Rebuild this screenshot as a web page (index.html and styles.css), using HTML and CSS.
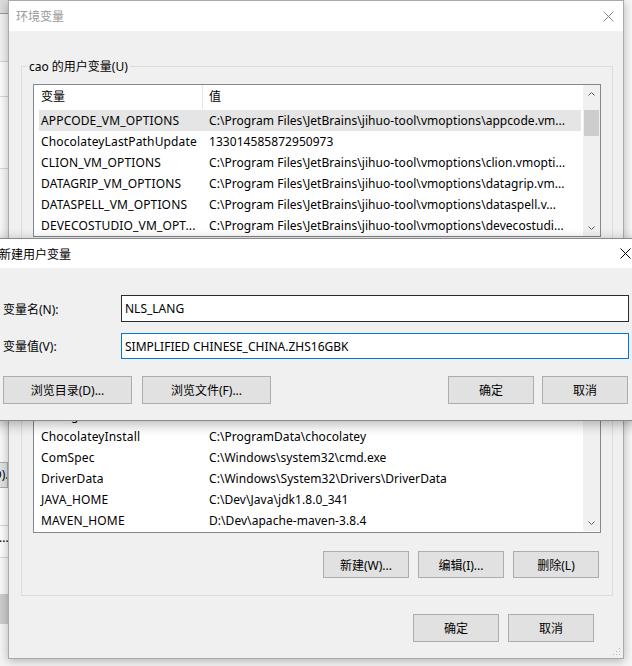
FILE: index.html
```html
<!DOCTYPE html>
<html lang="zh-CN">
<head>
<meta charset="utf-8">
<title>环境变量</title>
<link rel="stylesheet" href="styles.css">
</head>
<body>
<div class="behind">
  <div class="bh b1"></div>
  <div class="bh b2"></div>
  <div class="bh b3"></div>
  <div class="bh b4"></div>
  <div class="bh b5"></div>
  <div class="bh b6"></div>
  <div class="bh b7"><span class="tail">D).</span></div>
  <div class="bh b8"></div>
  <div class="bh b9"><span class="dots">...</span></div>
  <div class="bh b10"></div>
  <div class="bh b11"></div>
  <div class="bh b12"></div>
</div>

<div class="env">
  <div class="titlebar inactive">
    <span class="title">环境变量</span>
    <svg class="close" width="11" height="11" viewBox="0 0 11 11"><path d="M0.5 0.5 L10.5 10.5 M10.5 0.5 L0.5 10.5" stroke="#8c8c8c" stroke-width="1" fill="none"/></svg>
  </div>
  <div class="env-body">
    <div class="group g1">
      <div class="group-label">cao 的用户变量(U)</div>
      <div class="list l1">
        <div class="list-main">
          <div class="lv-header"><div class="h1">变量</div><div class="h2">值</div></div>
          <div class="row sel"><span class="c1">APPCODE_VM_OPTIONS</span><span class="c2">C:\Program Files\JetBrains\jihuo-tool\vmoptions\appcode.vm...</span></div>
          <div class="row"><span class="c1">ChocolateyLastPathUpdate</span><span class="c2">133014585872950973</span></div>
          <div class="row"><span class="c1">CLION_VM_OPTIONS</span><span class="c2">C:\Program Files\JetBrains\jihuo-tool\vmoptions\clion.vmopti...</span></div>
          <div class="row"><span class="c1">DATAGRIP_VM_OPTIONS</span><span class="c2">C:\Program Files\JetBrains\jihuo-tool\vmoptions\datagrip.vm...</span></div>
          <div class="row"><span class="c1">DATASPELL_VM_OPTIONS</span><span class="c2">C:\Program Files\JetBrains\jihuo-tool\vmoptions\dataspell.v...</span></div>
          <div class="row"><span class="c1">DEVECOSTUDIO_VM_OPT...</span><span class="c2">C:\Program Files\JetBrains\jihuo-tool\vmoptions\devecostudi...</span></div>
        </div>
        <div class="vscroll">
          <div class="arrow"><svg width="7" height="4" viewBox="0 0 7 4"><path d="M0.5 3.5 L3.5 0.5 L6.5 3.5" stroke="#606060" fill="none"/></svg></div>
          <div class="thumb"></div>
          <div class="track"></div>
          <div class="arrow"><svg width="7" height="4" viewBox="0 0 7 4"><path d="M0.5 0.5 L3.5 3.5 L6.5 0.5" stroke="#606060" fill="none"/></svg></div>
        </div>
      </div>
      <div class="btnrow occluded">
        <button class="btn">新建(N)...</button>
        <button class="btn">编辑(E)...</button>
        <button class="btn">删除(D)</button>
      </div>
    </div>

    <div class="group g2">
      <div class="group-label occluded">系统变量(S)</div>
      <div class="list l2">
        <div class="list-main">
          <div class="lv-header occluded"><div class="h1">变量</div><div class="h2">值</div></div>
          <div class="row occluded"><span class="c1">ACSetupSvcPort</span><span class="c2">23210</span></div>
          <div class="row occluded"><span class="c1">ACSvcPort</span><span class="c2">17532</span></div>
          <div class="row"><span class="c1">asl.log</span><span class="c2">Destination=file</span></div>
          <div class="row"><span class="c1">ChocolateyInstall</span><span class="c2">C:\ProgramData\chocolatey</span></div>
          <div class="row"><span class="c1">ComSpec</span><span class="c2">C:\Windows\system32\cmd.exe</span></div>
          <div class="row"><span class="c1">DriverData</span><span class="c2">C:\Windows\System32\Drivers\DriverData</span></div>
          <div class="row"><span class="c1">JAVA_HOME</span><span class="c2">C:\Dev\Java\jdk1.8.0_341</span></div>
          <div class="row"><span class="c1">MAVEN_HOME</span><span class="c2">D:\Dev\apache-maven-3.8.4</span></div>
        </div>
        <div class="vscroll">
          <div class="arrow"><svg width="7" height="4" viewBox="0 0 7 4"><path d="M0.5 3.5 L3.5 0.5 L6.5 3.5" stroke="#606060" fill="none"/></svg></div>
          <div class="track"></div>
          <div class="arrow"><svg width="7" height="4" viewBox="0 0 7 4"><path d="M0.5 0.5 L3.5 3.5 L6.5 0.5" stroke="#606060" fill="none"/></svg></div>
        </div>
      </div>
      <div class="btnrow">
        <button class="btn">新建(W)...</button>
        <button class="btn">编辑(I)...</button>
        <button class="btn">删除(L)</button>
      </div>
    </div>

    <div class="footer">
      <button class="btn tall">确定</button>
      <button class="btn tall">取消</button>
    </div>
    <div class="grip">
      <svg width="8" height="8" viewBox="0 0 8 8"><g fill="#b8b8b8"><rect x="6" y="0" width="1" height="1"/><rect x="3" y="3" width="1" height="1"/><rect x="6" y="3" width="1" height="1"/><rect x="0" y="6" width="1" height="1"/><rect x="3" y="6" width="1" height="1"/><rect x="6" y="6" width="1" height="1"/></g></svg>
    </div>
  </div>
</div>

<div class="dialog">
  <div class="titlebar">
    <span class="title">新建用户变量</span>
    <svg class="close" width="11" height="11" viewBox="0 0 11 11"><path d="M0.5 0.5 L10.5 10.5 M10.5 0.5 L0.5 10.5" stroke="#000" stroke-width="1" fill="none"/></svg>
  </div>
  <div class="dlg-body">
    <div class="field">
      <label class="flabel">变量名(N):</label>
      <div class="input hover">NLS_LANG</div>
    </div>
    <div class="field f2">
      <label class="flabel">变量值(V):</label>
      <div class="input focus">SIMPLIFIED CHINESE_CHINA.ZHS16GBK</div>
    </div>
    <div class="dlg-buttons">
      <button class="btn wide">浏览目录(D)...</button>
      <button class="btn wide">浏览文件(F)...</button>
      <span class="spacer"></span>
      <button class="btn tall">确定</button>
      <button class="btn tall">取消</button>
    </div>
  </div>
</div>
</body>
</html>
```

FILE: styles.css
```css
* { box-sizing: border-box; }
html, body { margin: 0; padding: 0; }
body {
  width: 632px;
  height: 666px;
  overflow: hidden;
  position: relative;
  background: #f6f6f6;
  font-family: "Noto Sans", "Noto Sans CJK SC", sans-serif;
  font-size: 12px;
  color: #000;
}

/* part of a window lying behind, at the left edge */
.behind {
  position: absolute;
  left: 0; top: 0;
  width: 8px; height: 666px;
  background: #f0f0f0;
  overflow: hidden;
  display: flex;
  flex-direction: column;
}
.bh { flex: none; white-space: nowrap; overflow: hidden; }
.b1 { height: 13px; background: #dcdcdc; }
.b2 { height: 1px; background: #9a9a9a; }
.b3 { height: 48px; background: #f0f0f0; border-bottom: 1px solid #d0d0d0; }
.b4 { height: 35px; background: #fafafa; border-bottom: 1px solid #d6d6d6; }
.b5 { height: 72px; background: #fafafa; border-bottom: 1px solid #d6d6d6; }
.b6 { height: 293px; background: #f7f7f7; }
.b7 { height: 26px; background: #e1e1e1; border: 1px solid #adadad; border-left: 0; line-height: 24px; }
.b7 .tail { display: inline-block; margin-left: -7px; }
.b8 { height: 38px; background: #fbfbfb; border-bottom: 1px solid #d6d6d6; }
.b9 { height: 32px; background: #fbfbfb; line-height: 24px; border-bottom: 1px solid #d6d6d6; }
.b9 .dots { display: inline-block; margin-left: -1px; }
.b10 { height: 36px; background: #f7f7f7; }
.b11 { height: 30px; background: #cccccc; }
.b12 { flex: 1; background: #f4f4f4; }

/* windows */
.titlebar {
  flex: none;
  display: flex;
  align-items: center;
  justify-content: space-between;
  background: #fff;
}
.title { white-space: nowrap; }
.inactive .title { color: #999; }
.close { flex: none; display: block; }

.occluded { visibility: hidden; }

.env {
  position: absolute;
  left: 8px; top: 0;
  width: 616px; height: 659px;
  background: #f0f0f0;
  border: 1px solid #aaaaaa;
  box-shadow: 0 2px 9px rgba(0,0,0,0.28);
  display: flex;
  flex-direction: column;
}
.env .titlebar { height: 30px; padding: 0 9px 0 7px; }
.env-body {
  flex: 1;
  position: relative;
  padding: 35px 10px 0 12px;
  display: flex;
  flex-direction: column;
}

.group {
  border: 1px solid #dcdcdc;
  padding: 0 11px;
}
.g1 { padding-bottom: 14px; }
.g2 { margin-top: 26px; padding-bottom: 17px; }
.group-label {
  width: max-content;
  height: 17px;
  line-height: 17px;
  margin: -9px 0 0 -6px;
  padding: 0 2px;
  background: #f0f0f0;
  white-space: nowrap;
}

.list {
  margin-top: 9px;
  border: 1px solid #828790;
  background: #fff;
  display: flex;
  overflow: hidden;
}
.l1 { height: 153px; }
.l2 { height: 196px; padding-bottom: 1px; }
.list-main { flex: 1; min-width: 0; overflow: hidden; }
.lv-header { height: 25px; display: flex; }
.h1 { width: 168px; padding-left: 7px; line-height: 24px; }
.h2 { flex: 1; border-left: 1px solid #e5e5e5; padding-left: 6px; line-height: 24px; height: 24px; }
.row {
  height: 21px;
  line-height: 21px;
  margin: 0 2px 0 5px;
  display: flex;
  white-space: nowrap;
}
.row.sel { background: #e5e5e5; }
.c1 { width: 163px; flex: none; padding-left: 2px; overflow: hidden; letter-spacing: 0.15px; }
.c2 { flex: 1; padding-left: 7px; overflow: hidden; letter-spacing: 0.05px; }

.vscroll {
  width: 17px;
  flex: none;
  background: #f0f0f0;
  display: flex;
  flex-direction: column;
}
.arrow { height: 17px; flex: none; display: flex; align-items: center; justify-content: center; }
.thumb { height: 26px; margin: 8px 1px 0; background: #cdcdcd; flex: none; }
.track { flex: 1; }

.btn {
  font: inherit;
  color: #000;
  background: #e1e1e1;
  border: 1px solid #adadad;
  border-radius: 0;
  padding: 0;
  margin: 0;
  width: 86px;
  height: 27px;
  white-space: nowrap;
}
.btn.tall { height: 28px; }
.btn.wide { width: 129px; height: 28px; }

.btnrow {
  margin-top: 14px;
  display: flex;
  justify-content: flex-end;
  gap: 9px;
  padding-right: 2px;
}
.g2 .btnrow { margin-top: 18px; }

.footer {
  margin-top: 18px;
  display: flex;
  justify-content: flex-end;
  gap: 9px;
  padding-right: 19px;
}
.grip { position: absolute; right: 2px; bottom: 2px; width: 8px; height: 8px; }
.grip svg { display: block; }

/* new variable dialog */
.dialog {
  position: absolute;
  left: -9px; top: 238px;
  width: 650px; height: 183px;
  background: #f0f0f0;
  border: 1px solid #8a8a8a;
  box-shadow: 0 3px 12px rgba(0,0,0,0.3);
  display: flex;
  flex-direction: column;
}
.dialog .titlebar { height: 29px; padding: 0 9px 0 7px; }
.dlg-body {
  flex: 1;
  padding: 27px 11px 0 11px;
  display: flex;
  flex-direction: column;
}
.field { display: flex; align-items: center; height: 27px; }
.field.f2 { margin-top: 11px; height: 26px; }
.flabel { width: 118px; flex: none; white-space: nowrap; }
.input {
  flex: 1;
  height: 100%;
  background: #fff;
  border: 1px solid #7a7a7a;
  padding-left: 3px;
  display: flex;
  align-items: center;
  white-space: nowrap;
}
.input.hover { border-color: #2b2b2b; }
.input.focus { border-color: #0078d7; }
.dlg-buttons {
  margin-top: 17px;
  display: flex;
  gap: 10px;
  padding-right: 1px;
}
.dlg-buttons .spacer { flex: 1; }
.dlg-buttons .tall + .tall { margin-left: -2px; }
```
